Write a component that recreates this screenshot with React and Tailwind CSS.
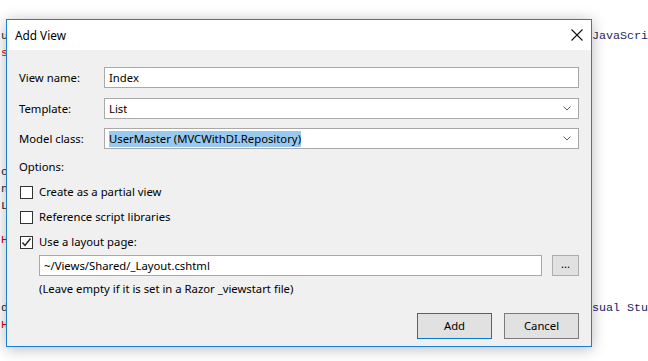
import React from 'react';

const lines = [
  { left: <span className="text-[#1e1e1e]">u</span>, right: <span className="text-[#2a1f5c]">JavaScri</span> },
  { left: <><span className="text-[#e00000]">s</span><span className="text-[#0000ff]">=</span></>, right: '' },
  { left: '', right: '' },
  { left: '', right: '' },
  { left: '', right: '' },
  { left: '', right: '' },
  { left: '', right: '' },
  { left: '', right: '' },
  { left: <span className="text-[#1e1e1e]">ou</span>, right: '' },
  { left: <span className="text-[#1e1e1e]">n</span>, right: '' },
  { left: <span className="text-[#1e1e1e]">Lo</span>, right: '' },
  { left: '', right: '' },
  { left: <span className="text-[#e00000]">H</span>, right: '' },
  { left: '', right: '' },
  { left: '', right: '' },
  { left: '', right: '' },
  { left: <span className="text-[#1e1e1e]">d:</span>, right: <span className="text-[#1a1a6e]">sual Stu</span> },
  { left: <span className="text-[#e00000]">H</span>, right: '' },
];

function Chevron() {
  return (
    <svg width="8" height="5" viewBox="0 0 8 5" className="shrink-0">
      <path d="M0.5 0.5 L4 4 L7.5 0.5" fill="none" stroke="#606060" strokeWidth="1" />
    </svg>
  );
}

function TextBox({ children, select, className = '' }) {
  return (
    <div className={`h-[21px] flex items-center justify-between bg-white border border-[#a9a9a9] pl-[4px] pr-[7px] ${className}`}>
      <div className="truncate leading-[16px]">{children}</div>
      {select && <Chevron />}
    </div>
  );
}

function Checkbox({ checked, label }) {
  return (
    <div className="flex items-center h-[16px]">
      <div className="w-[13px] h-[13px] border border-[#333] bg-white flex items-center justify-center">
        {checked && (
          <svg width="11" height="11" viewBox="0 0 11 11">
            <path d="M1.5 5.5 L4 8.5 L9.5 1.5" fill="none" stroke="#222" strokeWidth="1.4" />
          </svg>
        )}
      </div>
      <span className="ml-[6px] leading-[16px]">{label}</span>
    </div>
  );
}

function FieldRow({ label, children, className = '' }) {
  return (
    <div className={`flex items-center ${className}`}>
      <span className="w-[85px] shrink-0 leading-[16px]">{label}</span>
      <div className="flex-1">{children}</div>
    </div>
  );
}

export default function App() {
  return (
    <div className="relative w-[648px] h-[361px] overflow-hidden bg-white">
      {/* editor behind the dialog */}
      <div className="pt-[28px] pl-[1px] font-['Liberation_Mono',monospace] text-[11.7px]">
        {lines.map((l, i) => (
          <div key={i} className="grid grid-cols-[591px_1fr] h-[17px] leading-[17px] whitespace-nowrap">
            <div>{l.left}</div>
            <div>{l.right}</div>
          </div>
        ))}
      </div>

      {/* dialog window */}
      <div className="absolute left-[6px] top-[19px] w-[586px] h-[328px] border border-[#1c7fd6] bg-[#f0f0f0] shadow-[0_2px_14px_rgba(0,0,0,0.28)] flex flex-col font-['Noto_Sans',sans-serif] text-[11.3px] text-black">
        <div className="h-[30px] bg-white flex items-center justify-between pl-[8px] pr-[8px]">
          <span className="leading-[16px] text-[11.8px]">Add View</span>
          <svg width="12" height="12" viewBox="0 0 12 12">
            <path d="M0.5 0.5 L11.5 11.5 M11.5 0.5 L0.5 11.5" stroke="#111" strokeWidth="1.1" fill="none" />
          </svg>
        </div>

        <div className="flex-1 flex flex-col px-[12px] pt-[17px]">
          <FieldRow label="View name:">
            <TextBox>Index</TextBox>
          </FieldRow>
          <FieldRow label="Template:" className="mt-[10px]">
            <TextBox select>List</TextBox>
          </FieldRow>
          <FieldRow label="Model class:" className="mt-[9px]">
            <TextBox select>
              <span className="bg-[#99c9ef] py-[1px]">UserMaster (MVCWithDI.Repository)</span>
            </TextBox>
          </FieldRow>

          <div className="mt-[10px] leading-[16px]">Options:</div>
          <div className="mt-[9px] flex flex-col gap-[9px] pl-[1px]">
            <Checkbox label="Create as a partial view" />
            <Checkbox label="Reference script libraries" />
            <Checkbox checked label="Use a layout page:" />
          </div>

          <div className="mt-[5px] pl-[20px] flex items-center gap-[10px]">
            <TextBox className="flex-1">~/Views/Shared/_Layout.cshtml</TextBox>
            <button className="w-[27px] h-[21px] bg-[#e1e1e1] border border-[#adadad] flex items-center justify-center leading-[10px] pb-[4px]">
              ...
            </button>
          </div>
          <div className="mt-[5px] pl-[20px] leading-[16px]">
            (Leave empty if it is set in a Razor _viewstart file)
          </div>

          <div className="mt-[16px] flex justify-end gap-[12px]">
            <button className="w-[75px] h-[26px] bg-[#e1e1e1] border border-[#0078d7] leading-[16px]">
              Add
            </button>
            <button className="w-[75px] h-[26px] bg-[#e1e1e1] border border-[#7a7a7a] leading-[16px]">
              Cancel
            </button>
          </div>
        </div>
      </div>
    </div>
  );
}
